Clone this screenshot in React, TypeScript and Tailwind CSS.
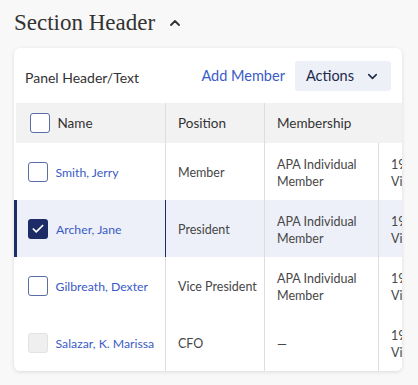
import { ChevronDown, ChevronUp, Check } from 'lucide-react';

type Member = {
  name: string;
  position: string;
  membership: string[];
  address: string[];
  selected?: boolean;
  disabled?: boolean;
};

const members: Member[] = [
  { name: 'Smith, Jerry', position: 'Member', membership: ['APA Individual', 'Member'], address: ['1984 Main St.', 'Vienna, VA'] },
  { name: 'Archer, Jane', position: 'President', membership: ['APA Individual', 'Member'], address: ['1984 Main St.', 'Vienna, VA'], selected: true },
  { name: 'Gilbreath, Dexter', position: 'Vice President', membership: ['APA Individual', 'Member'], address: ['1984 Main St.', 'Vienna, VA'] },
  { name: 'Salazar, K. Marissa', position: 'CFO', membership: ['—'], address: ['1984 Main St.', 'Vienna, VA'], disabled: true },
];

function Box({ checked, disabled }: { checked?: boolean; disabled?: boolean }) {
  if (checked) {
    return (
      <span className="flex h-5 w-5 shrink-0 items-center justify-center rounded-[3px] bg-[#1d2c66]">
        <Check size={14} strokeWidth={3} className="text-white" />
      </span>
    );
  }
  if (disabled) {
    return <span className="block h-5 w-5 shrink-0 rounded-[3px] border border-[#e2e2e2] bg-[#efefef]" />;
  }
  return <span className="block h-5 w-5 shrink-0 rounded-[3px] border border-[#5b6da6] bg-white" />;
}

export default function App() {
  return (
    <div className="min-h-[385px] w-[418px] bg-[#f8f8f8] pt-[9px] font-['Lato',sans-serif] text-[#333]">
      {/* Section header */}
      <div className="flex items-center gap-3 pl-[14px]">
        <h2 className="font-['Liberation_Serif',serif] text-[23px] leading-[28px] text-[#333]">Section Header</h2>
        <ChevronUp size={16} strokeWidth={2.75} className="text-[#333]" />
      </div>

      {/* Panel */}
      <div className="ml-[14px] mt-[11px] w-[388px] overflow-hidden rounded-[6px] bg-white shadow-[0_1px_4px_rgba(0,0,0,0.12)]">
        <div className="flex items-center justify-between pb-[12px] pl-[11px] pr-[11px] pt-[13px]">
          <span className="pt-[2px] text-[14px]">Panel Header/Text</span>
          <div className="flex items-center gap-[10px]">
            <span className="text-[14.5px] text-[#3a5bc7]">Add Member</span>
            <button className="flex h-[30px] items-center gap-[11px] rounded-[3px] bg-[#edf0f7] pl-[11px] pr-[11px] text-[14.5px] text-[#1e2a4c]">
              Actions
              <ChevronDown size={15} strokeWidth={2.5} />
            </button>
          </div>
        </div>

        <div className="w-[388px] overflow-hidden">
          <table className="w-[483px] table-fixed border-collapse text-left text-[12.5px]">
            <colgroup>
              <col className="w-[150px]" />
              <col className="w-[99px]" />
              <col className="w-[114px]" />
              <col className="w-[120px]" />
            </colgroup>
            <thead className="bg-[#f2f2f2] text-[13.5px]">
              <tr className="h-[40px]">
                <th className="border-r border-[#dddddd] pl-[14px] font-normal">
                  <div className="flex items-center gap-[8px]">
                    <Box />
                    Name
                  </div>
                </th>
                <th className="border-r border-[#dddddd] pl-[12px] font-normal">Position</th>
                <th colSpan={2} className="pl-[12px] font-normal">Membership</th>
              </tr>
            </thead>
            <tbody>
              {members.map((m) => (
                <tr key={m.name} className={`h-[57px] ${m.selected ? 'bg-[#edf0f8]' : 'bg-white'}`}>
                  <td className={`border-r ${m.selected ? 'border-l-[3px] border-l-[#1d2c66] border-r-[#1d2c66] pl-[11px]' : 'border-r-[#dddddd] pl-[12px]'}`}>
                    <div className="flex items-center gap-[8px]">
                      <Box checked={m.selected} disabled={m.disabled} />
                      <span className="whitespace-nowrap pt-[3px] text-[12.25px] text-[#3a5bc7]">{m.name}</span>
                    </div>
                  </td>
                  <td className="whitespace-nowrap border-r border-[#dddddd] pl-[12px] pt-[3px] text-[#474747]">{m.position}</td>
                  <td className="border-r border-[#dddddd] pl-[12px] pt-[3px] leading-[17px] text-[#474747]">
                    {m.membership.map((l) => (
                      <div key={l}>{l}</div>
                    ))}
                  </td>
                  <td className="pl-[12px] pt-[3px] leading-[17px] text-[#474747]">
                    {m.address.map((l) => (
                      <div key={l} className="whitespace-nowrap">{l}</div>
                    ))}
                  </td>
                </tr>
              ))}
            </tbody>
          </table>
        </div>
      </div>
    </div>
  );
}
